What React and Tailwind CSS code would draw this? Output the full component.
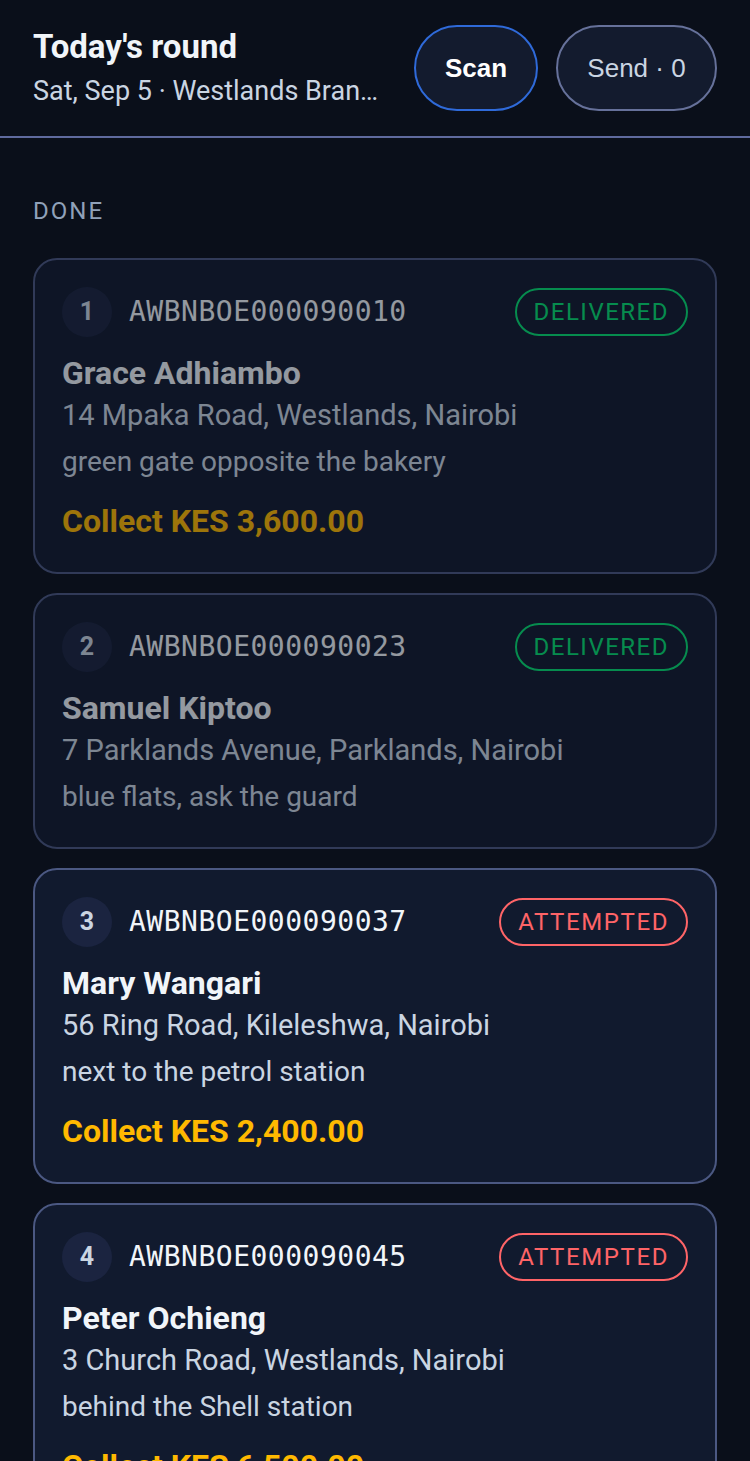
const stops = [
  {
    n: 1,
    awb: 'AWBNBOE000090010',
    status: 'delivered',
    name: 'Grace Adhiambo',
    address: '14 Mpaka Road, Westlands, Nairobi',
    note: 'green gate opposite the bakery',
    collect: 'KES 3,600.00',
  },
  {
    n: 2,
    awb: 'AWBNBOE000090023',
    status: 'delivered',
    name: 'Samuel Kiptoo',
    address: '7 Parklands Avenue, Parklands, Nairobi',
    note: 'blue flats, ask the guard',
  },
  {
    n: 3,
    awb: 'AWBNBOE000090037',
    status: 'attempted',
    name: 'Mary Wangari',
    address: '56 Ring Road, Kileleshwa, Nairobi',
    note: 'next to the petrol station',
    collect: 'KES 2,400.00',
  },
  {
    n: 4,
    awb: 'AWBNBOE000090045',
    status: 'attempted',
    name: 'Peter Ochieng',
    address: '3 Church Road, Westlands, Nairobi',
    note: 'behind the Shell station',
    collect: 'KES 6,500.00',
  },
];

function StatusBadge({ status }) {
  if (status === 'delivered') {
    return (
      <span className="flex-shrink-0 h-[48px] px-[17px] flex items-center rounded-full border-2 border-green-400 text-green-400 text-[24px] tracking-[1.5px] leading-none">
        DELIVERED
      </span>
    );
  }
  return (
    <span className="flex-shrink-0 h-[48px] px-[17px] flex items-center rounded-full border-2 border-red-400 text-red-400 text-[24px] tracking-[1.6px] leading-none">
      ATTEMPTED
    </span>
  );
}

function StopCard({ stop }) {
  const done = stop.status === 'delivered';
  return (
    <div
      className={`rounded-[24px] border-2 border-[#4b5882] bg-[#111a2e] px-[27px] pt-[27px] pb-[27px] ${done ? 'opacity-60' : ''}`}
    >
      {/* Top row */}
      <div className="flex items-center justify-between gap-3">
        <div className="flex items-center gap-[17px] min-w-0">
          <div className="w-[50px] h-[50px] rounded-full bg-[#1b2440] flex items-center justify-center text-[25px] font-bold text-slate-300">
            {stop.n}
          </div>
          <span className="font-['DejaVu_Sans_Mono',monospace] text-[28px] text-slate-100 tracking-[0.5px]">
            {stop.awb}
          </span>
        </div>
        <StatusBadge status={stop.status} />
      </div>

      {/* Body */}
      <div className="mt-[17px] text-[32px] leading-[38px] font-bold text-slate-100">{stop.name}</div>
      <div className="text-[29px] leading-[47px] text-slate-300">{stop.address}</div>
      <div className="text-[28px] leading-[46px] text-slate-300">{stop.note}</div>
      {stop.collect && (
        <div className="mt-[13px] text-[32px] leading-[47px] font-bold text-amber-400">
          Collect {stop.collect}
        </div>
      )}
    </div>
  );
}

export default function App() {
  return (
    <div className="min-h-screen bg-[#0a0f1a] font-['Roboto',sans-serif]">
      {/* Header */}
      <header className="flex items-center gap-[34px] px-[33px] py-[25px] border-b-2 border-[#5f6a9e]">
        <div className="flex-1 min-w-0">
          <h1 className="text-[33px] leading-[38px] font-bold text-slate-100">Today's round</h1>
          <p className="mt-[8px] text-[27px] leading-[34px] text-slate-300 truncate">
            Sat, Sep 5 · Westlands Branch
          </p>
        </div>
        <div className="flex items-center gap-[18px] flex-shrink-0 font-['Liberation_Sans',sans-serif]">
          <button className="h-[86px] w-[124px] rounded-full border-2 border-[#2f6ad9] bg-[#131b2e] text-[26px] font-bold text-white">
            Scan
          </button>
          <button className="h-[86px] w-[161px] rounded-full border-2 border-[#66719a] bg-[#131b2e] text-[26px] text-slate-300">
            Send · 0
          </button>
        </div>
      </header>

      {/* Content */}
      <main className="px-[33px] pt-[58px] pb-10">
        <div className="text-[24px] leading-[30px] tracking-[2px] text-slate-400">DONE</div>
        <div className="mt-[32px] flex flex-col gap-[19px]">
          {stops.map((s) => (
            <StopCard key={s.n} stop={s} />
          ))}
        </div>
      </main>
    </div>
  );
}
